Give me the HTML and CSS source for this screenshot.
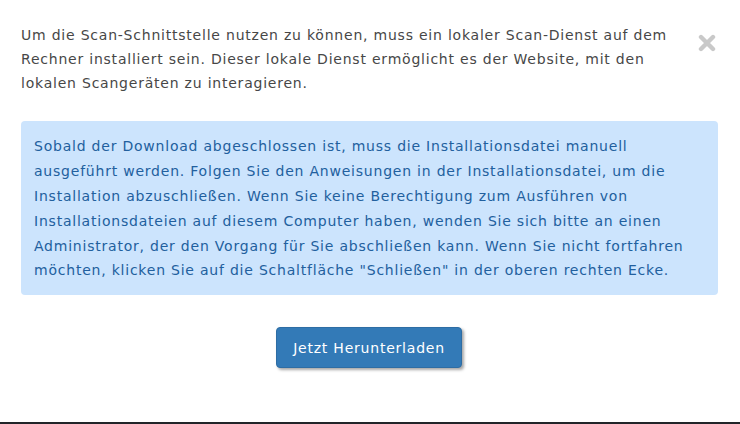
FILE: index.html
```html
<!DOCTYPE html>
<html lang="de">
<head>
<meta charset="utf-8">
<title>Scan-Dienst</title>
<link rel="stylesheet" href="styles.css">
</head>
<body>
<div class="dialog">
  <div class="header">
    <p class="intro">Um die Scan-Schnittstelle nutzen zu können, muss ein lokaler Scan-Dienst auf dem Rechner installiert sein. Dieser lokale Dienst ermöglicht es der Website, mit den lokalen Scangeräten zu interagieren.</p>
    <button class="close" type="button" aria-label="Schließen">
      <svg width="20" height="18" viewBox="0 0 20 18"><path d="M4 3 L16 15 M16 3 L4 15" stroke="#c9c9c9" stroke-width="4.4" stroke-linecap="round" fill="none"/></svg>
    </button>
  </div>
  <div class="alert">Sobald der Download abgeschlossen ist, muss die Installationsdatei manuell ausgeführt werden. Folgen Sie den Anweisungen in der Installationsdatei, um die Installation abzuschließen. Wenn Sie keine Berechtigung zum Ausführen von Installationsdateien auf diesem Computer haben, wenden Sie sich bitte an einen Administrator, der den Vorgang für Sie abschließen kann. Wenn Sie nicht fortfahren möchten, klicken Sie auf die Schaltfläche "Schließen" in der oberen rechten Ecke.</div>
  <div class="actions">
    <button class="btn-primary" type="button">Jetzt Herunterladen</button>
  </div>
</div>
<div class="bottom-bar"></div>
</body>
</html>
```

FILE: styles.css
```css
html, body {
  margin: 0;
  padding: 0;
  background: #ffffff;
}
body {
  font-family: "DejaVu Sans", "Liberation Sans", Arial, sans-serif;
  font-size: 14px;
  letter-spacing: 0.78px;
  height: 424px;
  display: flex;
  flex-direction: column;
  overflow: hidden;
}
.dialog {
  flex: 1;
  padding: 24px 22px 0 21px;
}
.header {
  display: flex;
  align-items: flex-start;
}
.intro {
  margin: 0;
  flex: 1;
  max-width: 662px;
  color: #474747;
  line-height: 23.8px;
}
.close {
  margin-left: auto;
  margin-top: 10px;
  margin-right: 1px;
  padding: 0;
  border: 0;
  background: none;
  width: 20px;
  height: 18px;
  display: flex;
}
.alert {
  margin-top: 26px;
  background: #cce4fd;
  color: #22609e;
  border-radius: 4px;
  padding: 13px 14px 12px 13px;
  line-height: 24.8px;
}
.actions {
  display: flex;
  justify-content: center;
  margin-top: 32px;
  padding-right: 1px;
}
.btn-primary {
  width: 186px;
  height: 41px;
  background: #337ab7;
  color: #ffffff;
  border: 1px solid #2e6da4;
  border-radius: 4px;
  font-family: "DejaVu Sans", "Liberation Sans", Arial, sans-serif;
  font-size: 14px;
  letter-spacing: 0.78px;
  box-shadow: 2px 2px 3px rgba(0,0,0,0.35);
  padding: 0;
}
.bottom-bar {
  height: 2px;
  background: #212529;
}
```
